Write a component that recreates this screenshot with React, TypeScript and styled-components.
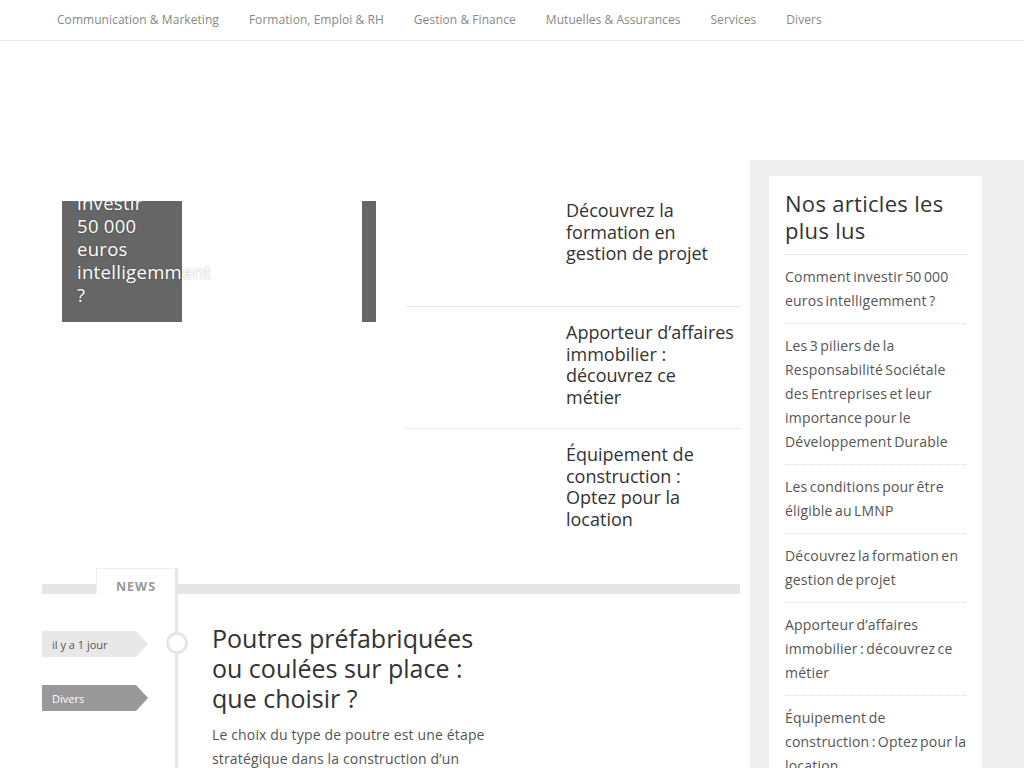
import React from 'react'
import styled, { createGlobalStyle } from 'styled-components'

const GlobalStyle = createGlobalStyle`
  html, body {
    margin: 0;
    padding: 0;
    background: #fff;
  }
  body {
    font-family: "Open Sans", Lato, Arial, sans-serif;
    color: #333;
  }
  * { box-sizing: border-box; }
`

const menu = [
  'Communication & Marketing',
  'Formation, Emploi & RH',
  'Gestion & Finance',
  'Mutuelles & Assurances',
  'Services',
  'Divers',
]

const featured = [
  'Découvrez la formation en gestion de projet',
  'Apporteur d’affaires immobilier : découvrez ce métier',
  'Équipement de construction : Optez pour la location',
]

const popular = [
  'Comment investir 50 000 euros intelligemment ?',
  'Les 3 piliers de la Responsabilité Sociétale des Entreprises et leur importance pour le Développement Durable',
  'Les conditions pour être éligible au LMNP',
  'Découvrez la formation en gestion de projet',
  'Apporteur d’affaires immobilier : découvrez ce métier',
  'Équipement de construction : Optez pour la location',
]

const App = () => {
  return (
    <>
      <GlobalStyle />
      <Header>
        <Menu>
          {menu.map((m) => (
            <MenuItem key={m}>{m}</MenuItem>
          ))}
        </Menu>
      </Header>

      <AdSpace />

      <Layout>
        <Main>
          <Featured>
            <Slider>
              <Tile>
                <TileCaption>Comment investir 50 000 euros intelligemment ?</TileCaption>
              </Tile>
              <SliderGap />
              <NextTile />
            </Slider>

            <List>
              {featured.map((f, i) => (
                <ListItem key={f} last={i === featured.length - 1}>
                  <Thumb />
                  <ListTitle>{f}</ListTitle>
                </ListItem>
              ))}
            </List>
          </Featured>

          <News>
            <NewsHead>
              <NewsTab>NEWS</NewsTab>
            </NewsHead>
            <NewsBody>
              <Meta>
                <Tag>il y a 1 jour</Tag>
                <Tag dark>Divers</Tag>
              </Meta>
              <Timeline>
                <Dot />
              </Timeline>
              <Article>
                <ArticleTitle>Poutres préfabriquées ou coulées sur place : que choisir ?</ArticleTitle>
                <ArticleText>
                  Le choix du type de poutre est une étape stratégique dans la construction d’un
                  bâtiment. Entre les poutres préfabriquées et celles coulées sur place, chaque option
                  présente ses avantages.
                </ArticleText>
              </Article>
            </NewsBody>
          </News>
        </Main>

        <Aside>
          <Widget>
            <WidgetTitle>Nos articles les plus lus</WidgetTitle>
            <WidgetList>
              {popular.map((p) => (
                <WidgetItem key={p}>{p}</WidgetItem>
              ))}
            </WidgetList>
          </Widget>
        </Aside>
      </Layout>
    </>
  )
}

export default App

const Header = styled.header`
  height: 41px;
  border-bottom: 1px solid #e6e6e6;
  padding-left: 57px;
  display: flex;
  align-items: center;
`

const Menu = styled.nav`
  display: flex;
  gap: 30px;
`

const MenuItem = styled.a`
  font-size: 12px;
  letter-spacing: 0.05px;
  color: #888;
  line-height: 16px;
  padding-bottom: 1px;
`

const AdSpace = styled.div`
  height: 119px;
`

const Layout = styled.div`
  display: flex;
  align-items: stretch;
  min-height: 700px;
`

const Main = styled.main`
  width: 698px;
  margin: 0 10px 0 42px;
  padding-top: 25px;
`

const Featured = styled.section`
  display: flex;
  gap: 30px;
  padding-left: 20px;
`

const Slider = styled.div`
  width: 314px;
  height: 121px;
  margin-top: 16px;
  display: flex;
`

const Tile = styled.div`
  width: 120px;
  height: 121px;
  background: #666;
  display: flex;
  flex-direction: column;
  justify-content: flex-end;
  padding: 0 0 16px 15px;
  clip-path: inset(0 -300px 0 0);
`

const TileCaption = styled.div`
  color: #fff;
  font-size: 18.5px;
  letter-spacing: 0.3px;
  line-height: 23px;
  text-shadow: 0 0 2px rgba(0, 0, 0, 0.35);
  width: 90px;
`

const SliderGap = styled.div`
  flex: 1;
`

const NextTile = styled.div`
  width: 14px;
  background: #666;
`

const List = styled.div`
  width: 334px;
`

const ListItem = styled.div<{ last?: boolean }>`
  display: flex;
  padding: 15px 0;
  border-bottom: ${(p) => (p.last ? 'none' : '1px solid #e6e6e6')};
`

const Thumb = styled.div`
  width: 160px;
  height: 91px;
  flex-shrink: 0;
`

const ListTitle = styled.a`
  font-size: 18px;
  line-height: 21.5px;
  color: #333;
  flex: 1;
  padding-right: 6px;
`

const News = styled.section`
  margin-top: 18px;
`

const NewsHead = styled.div`
  height: 26px;
  background: linear-gradient(to bottom, transparent 16px, #e6e6e6 16px);
  display: flex;
`

const NewsTab = styled.div`
  margin-left: 54px;
  width: 82px;
  height: 26px;
  background: #fff;
  border: 1px solid #eee;
  border-right: 3px solid #e6e6e6;
  border-bottom: none;
  font-size: 12.5px;
  font-weight: 700;
  letter-spacing: 1px;
  color: #999;
  text-align: center;
  padding-top: 11px;
  line-height: 14px;
`

const NewsBody = styled.div`
  display: flex;
  min-height: 200px;
`

const Meta = styled.div`
  width: 133px;
  padding-top: 37px;
  display: flex;
  flex-direction: column;
  gap: 28px;
`

const Tag = styled.span<{ dark?: boolean }>`
  width: 106px;
  height: 26px;
  display: flex;
  align-items: center;
  padding-left: 10px;
  font-size: 11px;
  color: ${(p) => (p.dark ? '#fff' : '#555')};
  background: ${(p) => (p.dark ? '#999' : '#e8e8e8')};
  clip-path: polygon(0 0, calc(100% - 12px) 0, 100% 50%, calc(100% - 12px) 100%, 0 100%);
`

const Timeline = styled.div`
  width: 3px;
  background: #e6e6e6;
  position: relative;
  flex-shrink: 0;
`

const Dot = styled.span`
  position: absolute;
  top: 38px;
  left: -9.5px;
  width: 22px;
  height: 22px;
  border-radius: 50%;
  border: 3px solid #e6e6e6;
  background: #fff;
`

const Article = styled.article`
  padding: 29px 0 0 34px;
  width: 330px;
`

const ArticleTitle = styled.h2`
  margin: 0;
  font-size: 25px;
  line-height: 30px;
  font-weight: 400;
  color: #333;
`

const ArticleText = styled.p`
  margin: 10px 0 0;
  font-size: 14px;
  letter-spacing: 0.15px;
  line-height: 24px;
  color: #555;
`

const Aside = styled.aside`
  flex: 1;
  background: #efefef;
  padding: 16px 42px 0 19px;
`

const Widget = styled.div`
  background: #fff;
  padding: 14px 15px 0 16px;
  min-height: 620px;
`

const WidgetTitle = styled.h3`
  margin: 0;
  font-size: 22px;
  letter-spacing: 0.3px;
  line-height: 27px;
  font-weight: 400;
  color: #333;
  padding-bottom: 10px;
  border-bottom: 1px solid #e6e6e6;
`

const WidgetList = styled.div`
  display: flex;
  flex-direction: column;
`

const WidgetItem = styled.a`
  font-size: 14px;
  letter-spacing: 0.2px;
  word-spacing: -1.5px;
  line-height: 24px;
  color: #555;
  padding: 10px 3px 10px 0;
  margin-right: -3px;
  border-bottom: 1px dotted #ddd;
  clip-path: inset(0 3px -1px 0);
`
